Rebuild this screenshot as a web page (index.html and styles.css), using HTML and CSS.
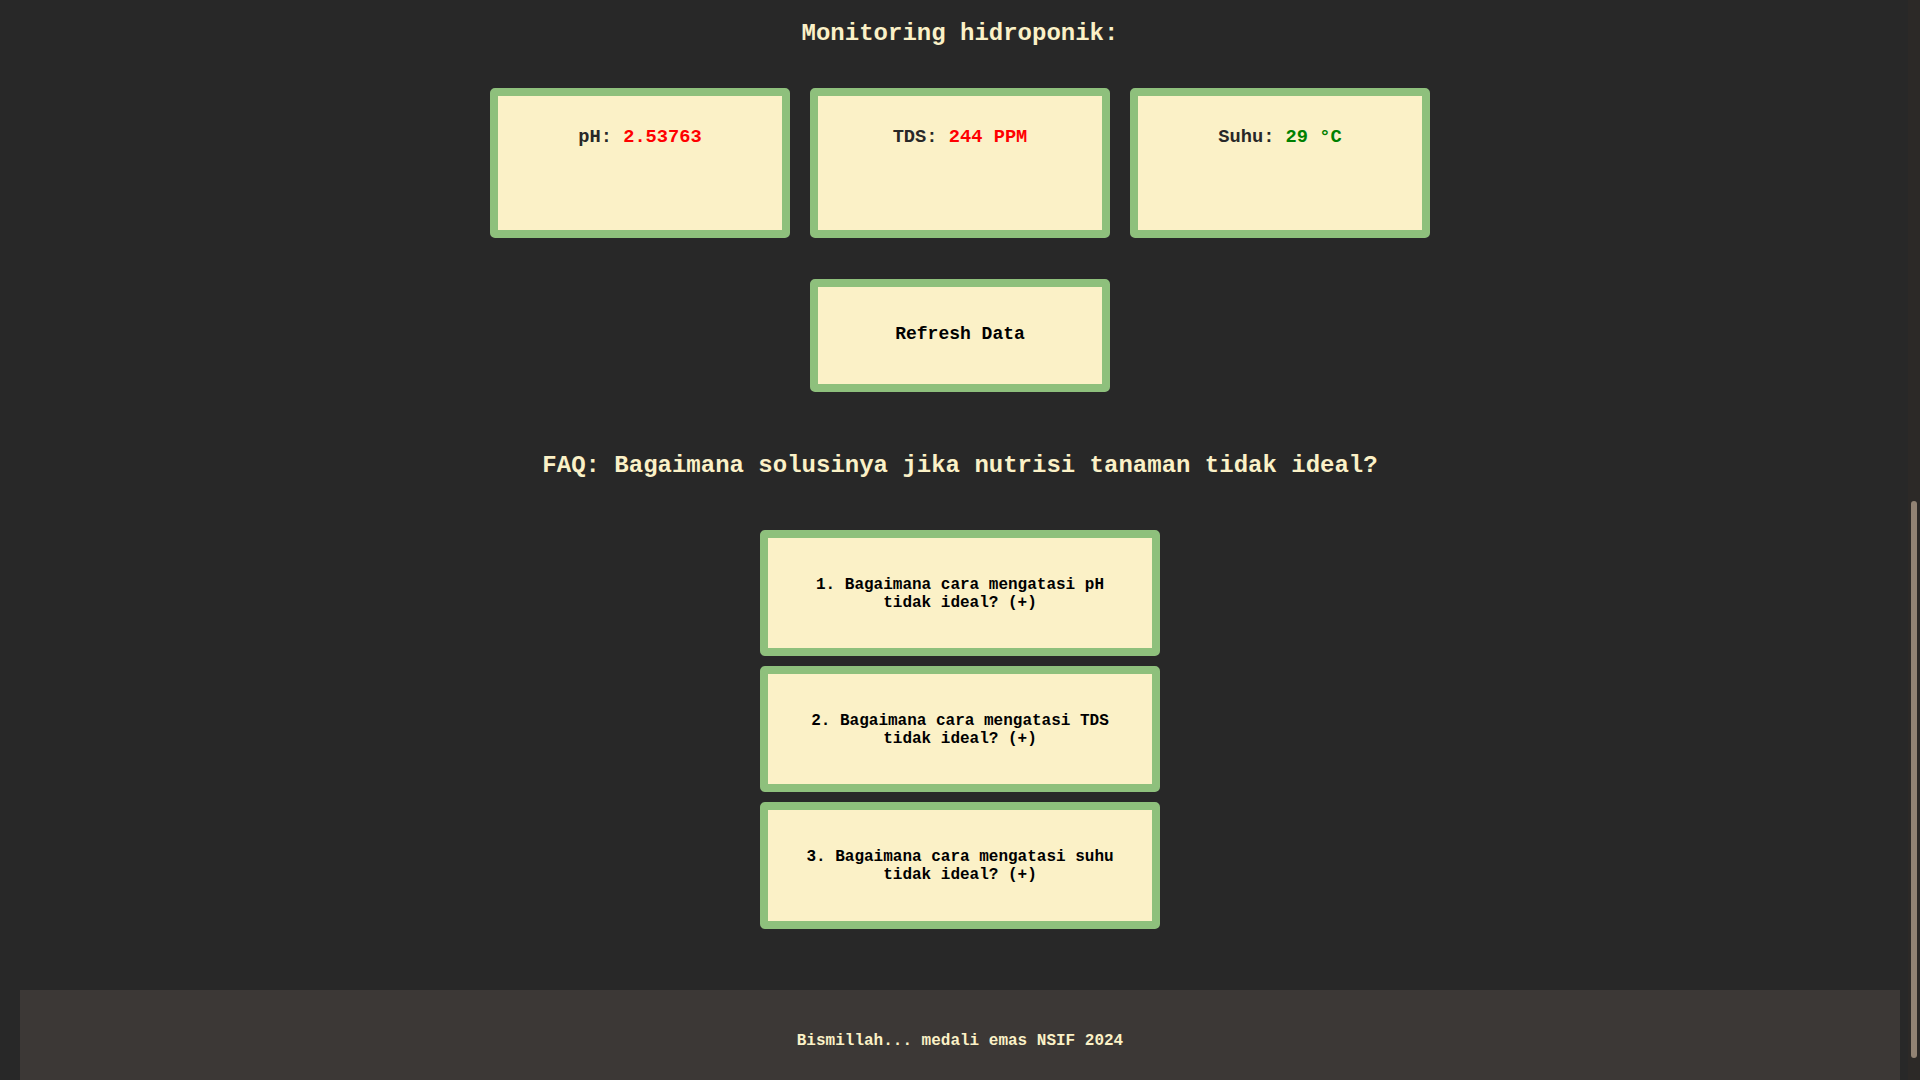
FILE: index.html
```html
<!DOCTYPE html>
<html lang="id">
<head>
<meta charset="utf-8">
<title>Monitoring hidroponik</title>
<link rel="stylesheet" href="styles.css">
</head>
<body>
<main class="page">
  <h2 class="title">Monitoring hidroponik:</h2>
  <section class="sensors">
    <div class="card"><h3 class="card-label">pH: <span class="bad">2.53763</span></h3></div>
    <div class="card"><h3 class="card-label">TDS: <span class="bad">244 PPM</span></h3></div>
    <div class="card"><h3 class="card-label">Suhu: <span class="good">29 °C</span></h3></div>
  </section>
  <button class="btn refresh">Refresh Data</button>
  <h2 class="title faq-title">FAQ: Bagaimana solusinya jika nutrisi tanaman tidak ideal?</h2>
  <section class="faq">
    <button class="faq-item">1. Bagaimana cara mengatasi pH tidak ideal? (+)</button>
    <button class="faq-item">2. Bagaimana cara mengatasi TDS tidak ideal? (+)</button>
    <button class="faq-item">3. Bagaimana cara mengatasi suhu tidak ideal? (+)</button>
  </section>
</main>
<footer class="footer"><p>Bismillah... medali emas NSIF 2024</p></footer>
<div class="scrollbar" aria-hidden="true"><div class="scrollbar-thumb"></div></div>
</body>
</html>
```
FILE: styles.css
```css
* { box-sizing: border-box; }
html, body { margin: 0; height: 100%; }
body {
  background: #282828;
  color: #fbf1c7;
  font-family: "Liberation Mono", "Courier New", monospace;
  overflow: hidden;
}
.page {
  display: flex;
  flex-direction: column;
  align-items: center;
  padding-top: 20px;
}
.title {
  margin: 0;
  font-size: 24px;
  line-height: 27.2px;
  font-weight: bold;
  color: #fbf1c7;
  text-align: center;
}
.sensors {
  display: flex;
  gap: 20px;
  margin-top: 40.8px;
}
.card {
  width: 300px;
  height: 150px;
  background: #fbf1c7;
  border: 8px solid #8ec07c;
  border-radius: 5px;
  padding: 30.7px 10px 0;
  text-align: center;
}
.card-label {
  margin: 0;
  font-size: 18.72px;
  line-height: 21.2px;
  font-weight: bold;
  color: #282828;
}
.bad { color: #ff0000; }
.good { color: #008000; }
.btn {
  font-family: "Liberation Mono", "Courier New", monospace;
  font-weight: bold;
  color: #000;
  background: #fbf1c7;
  border: 8px solid #8ec07c;
  border-radius: 5px;
  cursor: pointer;
}
.refresh {
  margin-top: 40.5px;
  width: 300px;
  padding: 37.4px 0 40.2px;
  font-size: 18px;
  line-height: 20.4px;
}
.faq-title { margin-top: 59.3px; }
.faq {
  display: flex;
  flex-direction: column;
  gap: 10px;
  margin-top: 51.1px;
}
.faq-item {
  width: 400px;
  padding: 37.6px 20px 35.8px;
  font-family: "Liberation Mono", "Courier New", monospace;
  font-size: 16px;
  line-height: 18.4px;
  font-weight: bold;
  color: #000;
  background: #fbf1c7;
  border: 8px solid #8ec07c;
  border-radius: 5px;
  text-align: center;
  cursor: pointer;
}
.footer {
  margin: 61.2px 20px 0;
  padding: 42.3px 0 40px;
  background: #3c3836;
  text-align: center;
}
.footer p {
  margin: 0;
  font-size: 16px;
  line-height: 18.13px;
  font-weight: bold;
  color: #fbf1c7;
}
.scrollbar {
  position: fixed;
  top: 0;
  right: 0;
  width: 12px;
  height: 100%;
  background: #2c2927;
}
.scrollbar-thumb {
  position: absolute;
  top: 501px;
  left: 3px;
  width: 6px;
  height: 557px;
  border-radius: 3px;
  background: #928374;
}
```
